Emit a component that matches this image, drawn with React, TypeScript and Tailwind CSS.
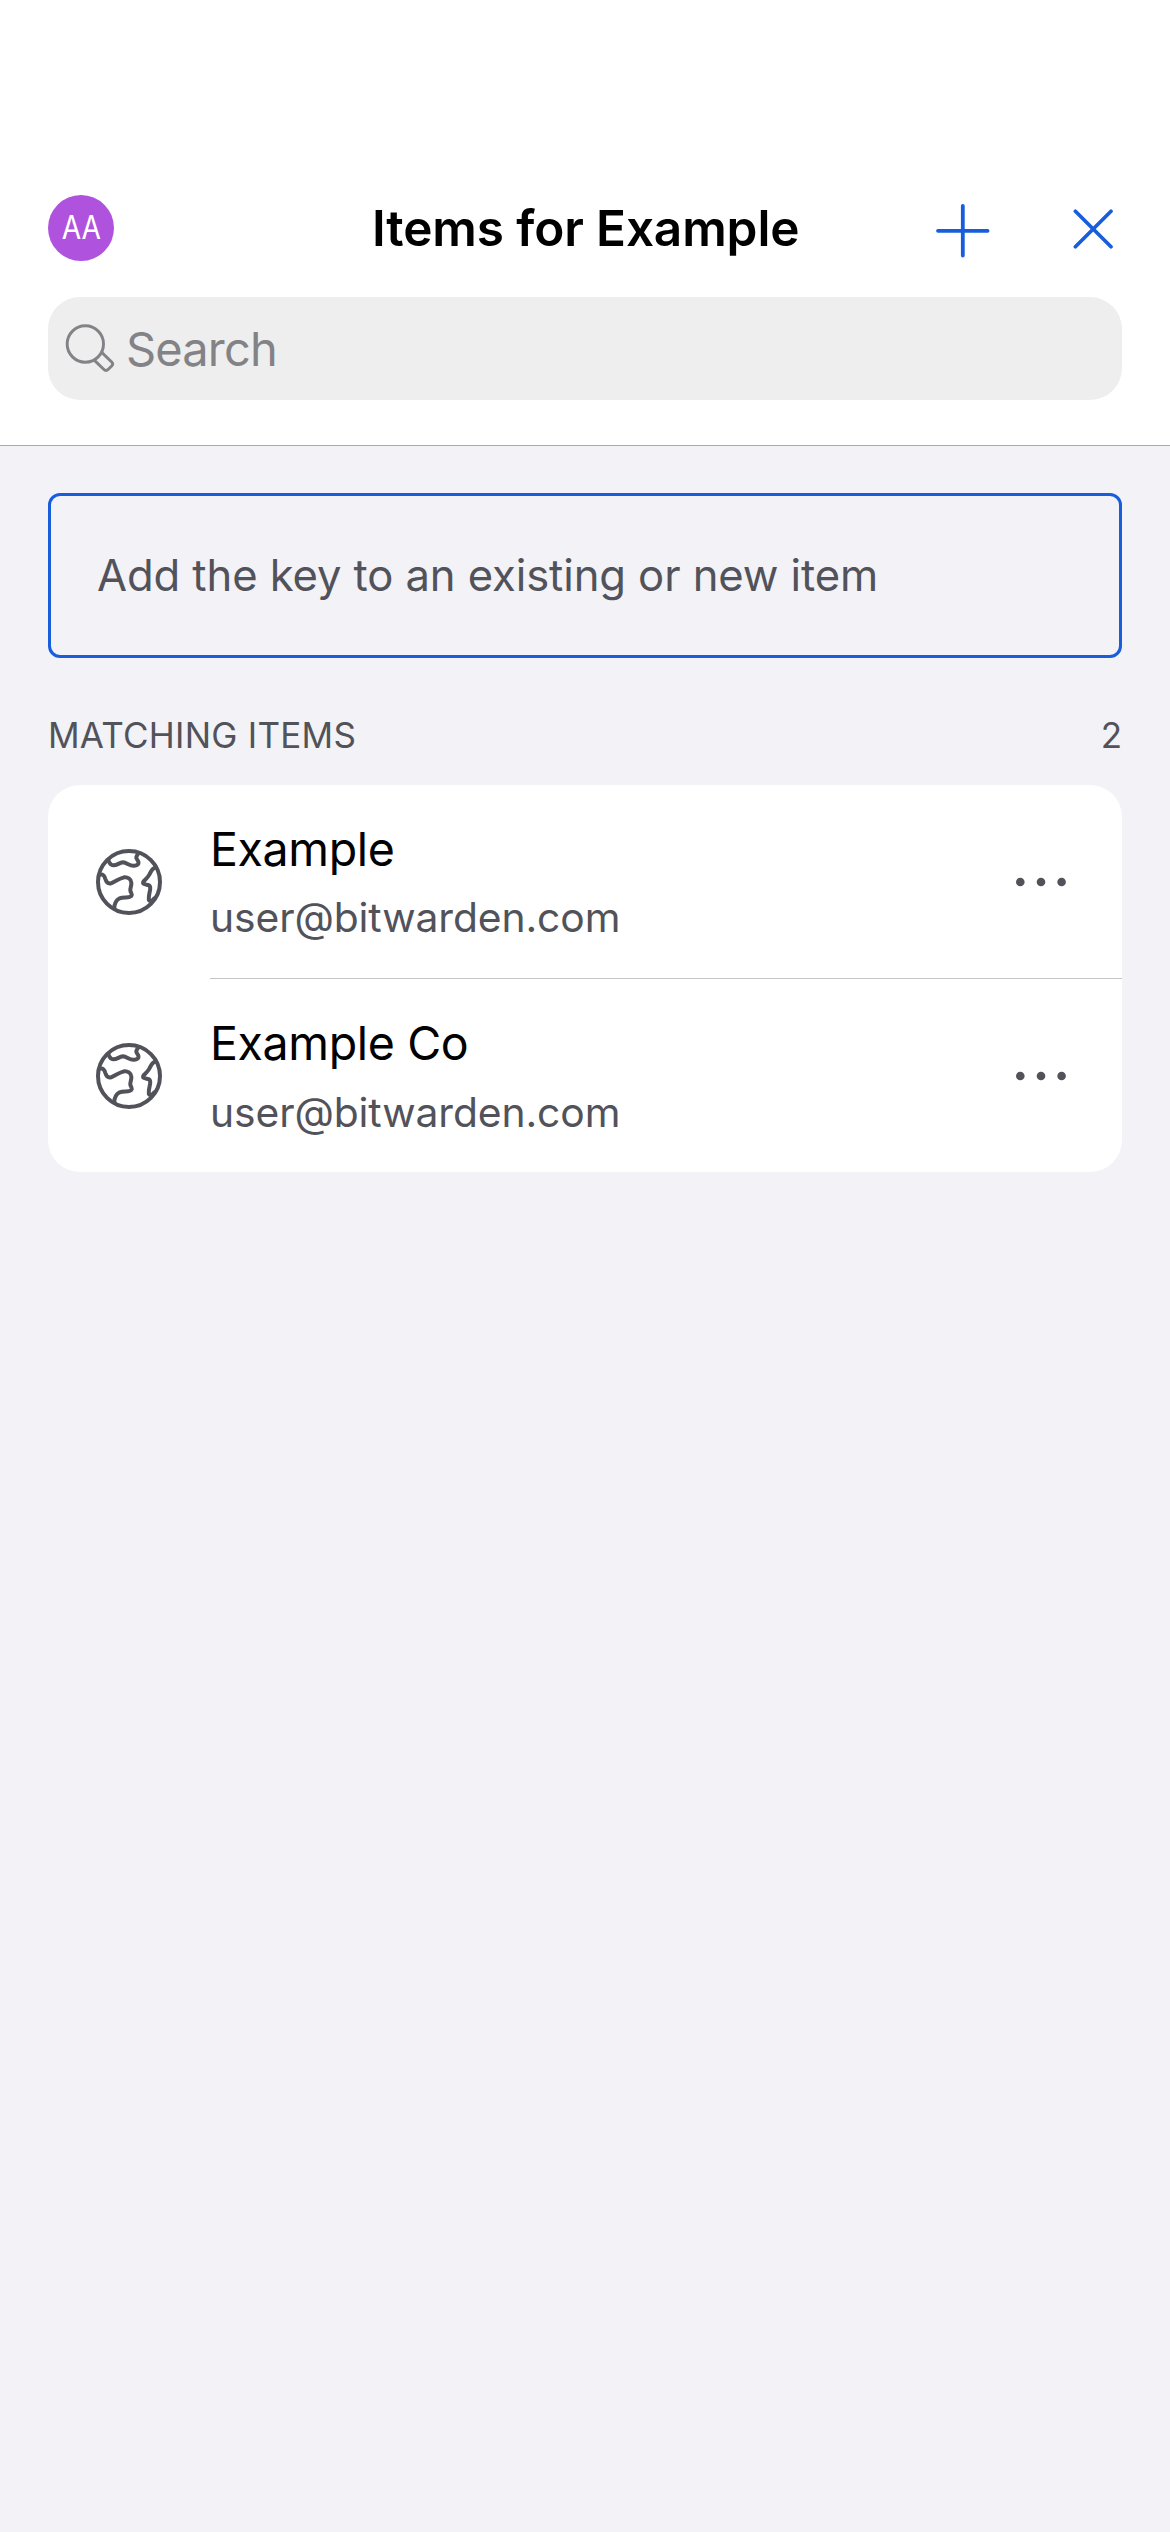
type Item = { name: string; username: string };

const items: Item[] = [
  { name: "Example", username: "user@bitwarden.com" },
  { name: "Example Co", username: "user@bitwarden.com" },
];

function PlusIcon() {
  return (
    <svg className="mt-[5px] size-[54px]" viewBox="0 0 54 54" fill="none" stroke="#175ddc" strokeWidth="3.8" strokeLinecap="round">
      <path d="M2 26.8H51.6M26.8 2V51.6" />
    </svg>
  );
}

function CloseIcon() {
  return (
    <svg className="mt-px size-[40px]" viewBox="0 0 40 40" fill="none" stroke="#175ddc" strokeWidth="3.7" strokeLinecap="round">
      <path d="M2.4 2.2L38 37.8M38 2.2L2.4 37.8" />
    </svg>
  );
}

function SearchIcon() {
  return (
    <svg className="size-[50px] shrink-0" viewBox="0 0 150 150" fill="none" stroke="#838387" strokeWidth="8.8" strokeLinejoin="round">
      <circle cx="61" cy="60" r="54.5" />
      <path d="M110 85L140 114Q146 120 140 126L130 136Q123 143 116 136L86 107" />
    </svg>
  );
}

function GlobeIcon() {
  return (
    <svg
      className="size-[66px] shrink-0"
      viewBox="48 57 198 198"
      fill="none"
      stroke="#52525a"
      strokeWidth="12"
      strokeLinecap="round"
      strokeLinejoin="round"
    >
      <circle cx="147" cy="156" r="93" />
      <path d="M85 91C89 101 92 106 99 106C111 107 117 98 129 97C140 98 148 107 160 107C171 108 177 103 175 95C172 87 168 87 169 81C170 77 172 74 175 71" />
      <path d="M59 134C69 132 73 136 76 147C79 157 84 162 93 160C104 156 119 145 132 142C143 141 153 147 154 158C155 168 150 174 151 182C153 190 158 192 154 198C148 205 130 200 119 205C107 211 103 222 103 236" />
      <path d="M228 112C218 114 213 123 208 134C202 145 194 150 190 155C187 163 195 163 204 165C213 167 211 178 209 186C207 196 205 206 207 211C210 216 218 211 223 205" />
    </svg>
  );
}

function MoreIcon() {
  return (
    <svg className="h-[10px] w-[52px]" viewBox="0 0 52 10" fill="#52525a">
      <circle cx="5.3" cy="5" r="4.3" />
      <circle cx="26" cy="5" r="4.3" />
      <circle cx="46.6" cy="5" r="4.3" />
    </svg>
  );
}

function ItemRow({ item, last }: { item: Item; last: boolean }) {
  return (
    <li className="flex">
      <div className="flex h-[193px] w-[162px] items-center pl-12">
        <GlobeIcon />
      </div>
      <div className={last ? "flex h-[193px] flex-1" : "flex h-[194px] flex-1 border-b border-[#c5c5c7]"}>
        <div className="flex-1 pt-[34px]">
          <p className="text-[46.5px] leading-[60px] tracking-[-0.36px] text-black">{item.name}</p>
          <p
            className={
              last
                ? "mt-[9px] text-[40.8px] leading-[60px] tracking-[-0.1px] text-[#52525a]"
                : "mt-2 text-[40.8px] leading-[60px] tracking-[-0.1px] text-[#52525a]"
            }
          >
            {item.username}
          </p>
        </div>
        <button className="mr-[55px] flex h-[193px] items-center" aria-label="More options">
          <MoreIcon />
        </button>
      </div>
    </li>
  );
}

export default function App() {
  return (
    <div className="min-h-[2532px] w-[1170px] bg-[#f2f2f7] font-['Inter',sans-serif]">
      <header className="h-[446px] border-b border-[#a9a9ac] bg-white px-12 pt-[195px]">
        <div className="flex h-[66px] items-center">
          <div className="flex size-[66px] items-center justify-center rounded-full bg-[#af52de]">
            <span className="scale-x-[0.88] text-[32px] leading-none text-white">AA</span>
          </div>
          <h1 className="ml-[258px] text-[49.5px] leading-[60px] font-semibold tracking-[-0.12px] whitespace-nowrap text-black">
            Items for Example
          </h1>
          <div className="mr-[9px] ml-auto flex items-center gap-[83px]">
            <button aria-label="Add">
              <PlusIcon />
            </button>
            <button aria-label="Close">
              <CloseIcon />
            </button>
          </div>
        </div>
        <div className="mt-9 flex h-[103px] items-center gap-[11px] rounded-[32px] bg-[#eeeeee] pl-[17px]">
          <SearchIcon />
          <span className="text-[47px] leading-[56px] tracking-[-0.85px] text-[#838387]">Search</span>
        </div>
      </header>

      <main className="px-12 pt-[47px]">
        <div className="flex h-[165px] items-center rounded-[12px] border-[3px] border-[#175ddc] pl-[46px]">
          <p className="text-[43.6px] tracking-[-0.1px] text-[#52525a]">Add the key to an existing or new item</p>
        </div>

        <div className="mt-[57px] flex justify-between text-[35px] leading-10 text-[#52525a]">
          <h2 className="tracking-[0.24px]">MATCHING ITEMS</h2>
          <span>2</span>
        </div>

        <ul className="mt-[30px] rounded-[32px] bg-white">
          {items.map((item, i) => (
            <ItemRow key={item.name} item={item} last={i === items.length - 1} />
          ))}
        </ul>
      </main>
    </div>
  );
}
